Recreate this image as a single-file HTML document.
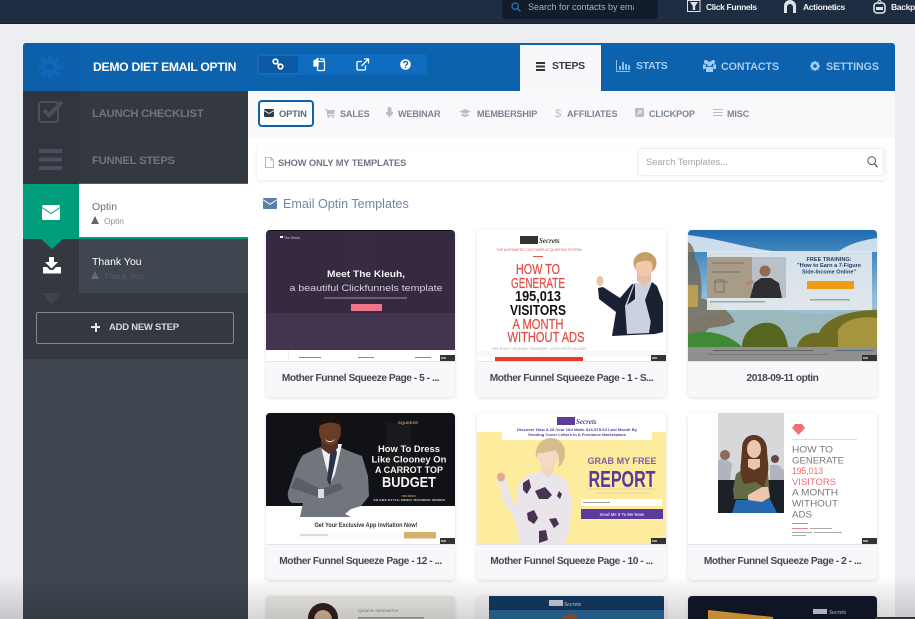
<!DOCTYPE html>
<html><head><meta charset="utf-8">
<style>
*{box-sizing:border-box}
html,body{margin:0;padding:0;width:915px;height:619px;overflow:hidden;background:#eceef2}
body{font-family:"Liberation Sans",sans-serif}
#w{position:absolute;left:0;top:0;width:915px;height:619px;overflow:hidden;filter:blur(.3px)}
.a{position:absolute}
.t{position:absolute;white-space:nowrap;line-height:14px;height:14px}
.b{font-weight:700}
svg{position:absolute;overflow:visible}
.card{position:absolute;width:189px;height:167px;background:#f8f8fa;border-radius:4px;box-shadow:0 1px 4px rgba(0,0,0,.13);overflow:hidden}
.card svg.th{left:0;top:0;width:189px;height:131px;overflow:hidden;filter:blur(.35px)}
.card .l{position:absolute;left:0;right:0;top:131px;height:36px;line-height:33px;text-align:center;font-weight:700;font-size:10.2px;letter-spacing:-.46px;color:#45484f;border-top:1px solid #e6e6ea}
.n{color:#7c8492;font-weight:700;font-size:9.1px}
.h{color:#a4cdf1;font-weight:700;font-size:10.4px}
</style></head><body><div id="w">

<!-- top bar -->
<div class="a" style="left:0;top:0;width:915px;height:24px;background:#1e2d41;border-bottom:1px solid #16212f"></div>
<div class="a" style="left:502px;top:0;width:156px;height:19px;background:#121c2a;border-radius:0 0 3px 3px"></div>
<svg style="left:511px;top:2px" width="10" height="10" viewBox="0 0 10 10"><circle cx="4.2" cy="4.2" r="3.2" fill="none" stroke="#2b78c2" stroke-width="1.3"/><path d="M6.6 6.6L9.4 9.4" stroke="#2b78c2" stroke-width="1.4"/></svg>
<div class="t" style="left:528px;top:0;width:106px;overflow:hidden;font-size:9px;color:#a9b0ba">Search for contacts by email</div>
<svg style="left:687px;top:0" width="14" height="12" viewBox="0 0 14 12"><rect x=".5" y=".5" width="12.5" height="11" fill="#1e2d41" stroke="#dfe3e8"/><path d="M3 2h8L8.2 6v4H5.8V6z" fill="#dfe3e8"/></svg>
<div class="t b" style="left:706px;top:0;font-size:8.6px;letter-spacing:-.4px;color:#eef0f3">Click Funnels</div>
<svg style="left:783px;top:0" width="14" height="13" viewBox="0 0 14 13"><path d="M1 13V6a6 6 0 0 1 12 0v7h-3V7a3 3 0 0 0-6 0v6z" fill="#dfe3e8"/></svg>
<div class="t b" style="left:803px;top:0;font-size:8.6px;letter-spacing:-.4px;color:#eef0f3">Actionetics</div>
<svg style="left:873px;top:0" width="13" height="13" viewBox="0 0 13 13"><rect x="1" y="3" width="11" height="10" rx="3" fill="none" stroke="#dfe3e8" stroke-width="1.6"/><rect x="3" y="7" width="7" height="3" fill="#dfe3e8"/><circle cx="6.5" cy="2" r="1.6" fill="none" stroke="#dfe3e8"/></svg>
<div class="t b" style="left:891px;top:0;font-size:8.6px;letter-spacing:-.4px;color:#eef0f3">Backpack</div>

<!-- panel header -->
<div class="a" style="left:23px;top:43px;width:872px;height:48px;background:#0d62ad;border-radius:3px 3px 0 0"></div>
<div class="a" style="left:23px;top:43px;width:56px;height:48px;background:#0c5fa9;border-radius:3px 0 0 0"></div>
<svg style="left:38px;top:55px" width="24" height="24" viewBox="0 0 24 24"><circle cx="12" cy="12" r="5.8" fill="none" stroke="#0e68b8" stroke-width="5"/><path d="M12 0v24M0 12h24M3.5 3.5l17 17M20.500 3.500l-17 17" stroke="#0e68b8" stroke-width="4" stroke-dasharray="4 16"/></svg>
<div class="t b" style="left:93px;top:60px;font-size:12.2px;color:#fff;letter-spacing:-.3px">DEMO DIET EMAIL OPTIN</div>
<div class="a" style="left:257px;top:54px;width:170px;height:21px;background:#0f6cbf;border-radius:3px"></div>
<div class="a" style="left:259px;top:56px;width:39px;height:17px;background:#0c5aa3;border-radius:2px"></div>
<svg style="left:272px;top:58px" width="12" height="13" viewBox="0 0 12 13" fill="none" stroke="#fff" stroke-width="1.7"><circle cx="3.500" cy="3.500" r="2.300"/><circle cx="8.500" cy="8.500" r="2.300"/><path d="M4.500 4.500l3 3"/></svg>
<svg style="left:313px;top:58px" width="13" height="13" viewBox="0 0 13 13" fill="none" stroke="#fff" stroke-width="1.200"><path d="M1 3l4-2.500V8H1z" fill="#fff"/><rect x="4.500" y="3.500" width="7" height="9" rx="1"/><path d="M7 1l4 0v2"/></svg>
<svg style="left:356px;top:58px" width="13" height="13" viewBox="0 0 13 13" fill="none" stroke="#fff" stroke-width="1.300"><path d="M9.500 7.500V11a1 1 0 0 1-1 1H2a1 1 0 0 1-1-1V4.500a1 1 0 0 1 1-1h4"/><path d="M5.500 8L12 1.500M8 1h4.500v4.500"/></svg>
<svg style="left:400px;top:59px" width="11" height="11" viewBox="0 0 11 11"><circle cx="5.500" cy="5.500" r="5.300" fill="#fff"/><path d="M3.700 4.200a1.900 1.700 0 1 1 2.800 1.500c-.7.400-1 .7-1 1.300" fill="none" stroke="#0d62ad" stroke-width="1.300"/><rect x="4.800" y="7.700" width="1.400" height="1.400" fill="#0d62ad"/></svg>

<div class="a" style="left:520px;top:45px;width:81px;height:46px;background:#f8f8fa"></div>
<div class="a" style="left:536px;top:62px;width:9px;height:1.500px;background:#333;box-shadow:0 3.500px 0 #333,0 7px 0 #333"></div>
<div class="t b" style="left:552px;top:60px;font-size:10.4px;letter-spacing:-.25px;color:#333a44">STEPS</div>
<svg style="left:616px;top:60px" width="14" height="12" viewBox="0 0 14 12" fill="#8dbdea"><path d="M0 0h1v11h13v1H0z"/><rect x="3" y="6" width="2" height="4"/><rect x="6" y="2" width="2" height="8"/><rect x="9" y="4" width="2" height="6"/><rect x="12" y="5" width="2" height="5"/></svg>
<div class="t h" style="left:636px;top:60px;letter-spacing:-.2px">STATS</div>
<svg style="left:703px;top:60px" width="13" height="12" viewBox="0 0 13 12" fill="#a4cdf1"><circle cx="3" cy="2" r="2"/><circle cx="10" cy="2" r="2"/><circle cx="6.500" cy="4" r="2.500"/><path d="M0 4.500h3L2.500 9H0zM10 4.500h3V9h-2.500zM3 7h7v5H3z"/></svg>
<div class="t h" style="left:721px;top:60px;font-size:10.6px">CONTACTS</div>
<svg style="left:810px;top:61px" width="10" height="10" viewBox="0 0 10 10"><circle cx="5" cy="5" r="3" fill="none" stroke="#a4cdf1" stroke-width="2.400"/><path d="M5 0v10M0 5h10M1.500 1.500l7 7M8.500 1.500l-7 7" stroke="#a4cdf1" stroke-width="1.400" stroke-dasharray="1.800 6.500"/></svg>
<div class="t h" style="left:826px;top:60px;font-size:10.6px">SETTINGS</div>

<!-- sidebar -->
<div class="a" style="left:23px;top:91px;width:225px;height:528px;background:#3f4650"></div>
<div class="a" style="left:23px;top:91px;width:225px;height:93px;background:#343941;border-bottom:1px solid #555a62"></div>
<div class="a" style="left:23px;top:91px;width:56px;height:93px;background:#31363e"></div>
<svg style="left:38px;top:100px" width="26" height="24" viewBox="0 0 26 24"><rect x="1" y="2" width="19" height="20" rx="3" fill="none" stroke="#4b515c" stroke-width="2"/><path d="M6 10l5 5L24 2" fill="none" stroke="#4b515c" stroke-width="4"/></svg>
<div class="t b" style="left:92px;top:107px;font-size:11.3px;color:#6f747d;letter-spacing:-.25px">LAUNCH CHECKLIST</div>
<div class="a" style="left:39px;top:149px;width:23px;height:4px;background:#4b515c;box-shadow:0 8.500px 0 #4b515c,0 17px 0 #4b515c"></div>
<div class="t b" style="left:92px;top:154px;font-size:11.3px;color:#6f747d;letter-spacing:-.25px">FUNNEL STEPS</div>

<div class="a" style="left:23px;top:184px;width:225px;height:55px;background:#fff;border-bottom:2px solid #009d7c"></div>
<div class="a" style="left:23px;top:184px;width:56px;height:55px;background:#009d7c"></div>
<svg style="left:42px;top:205px" width="18" height="15" viewBox="0 0 18 15"><rect width="18" height="15" rx="1.500" fill="#fff"/><path d="M0 2.500l9 6 9-6" fill="none" stroke="#009d7c" stroke-width="1"/></svg>
<div class="t" style="left:92px;top:200px;font-size:10.500px;color:#6a6e74">Optin</div>
<svg style="left:91px;top:216px" width="8" height="8" viewBox="0 0 8 8"><path d="M4 0l4 8H0z" fill="#666"/></svg>
<div class="t" style="left:104px;top:214px;font-size:8.500px;color:#8e9298;letter-spacing:-.1px">Optin</div>

<div class="a" style="left:23px;top:239px;width:225px;height:54px;background:#40464f"></div>
<div class="a" style="left:23px;top:239px;width:56px;height:54px;background:#343941"></div>
<svg style="left:41px;top:239px" width="22" height="10" viewBox="0 0 22 10"><path d="M0 0h22L11 10z" fill="#009d7c"/></svg>
<svg style="left:43px;top:257px" width="18" height="17" viewBox="0 0 18 17"><path d="M6 0h5v5h4l-6.500 6.500L2 5h4z" fill="#fff"/><path d="M0 10h4l3 3h3l3-3h5v6.500H0z" fill="#fff"/></svg>
<div class="t" style="left:92px;top:255px;font-size:10.500px;color:#fff">Thank You</div>
<svg style="left:91px;top:271px" width="8" height="8" viewBox="0 0 8 8"><path d="M4 0l4 8H0z" fill="#656b75"/></svg>
<div class="t" style="left:104px;top:269px;font-size:8.500px;color:#585e68;letter-spacing:-.1px">Thank You</div>

<div class="a" style="left:23px;top:293px;width:225px;height:66px;background:#343941"></div>
<svg style="left:42px;top:293px" width="19" height="11" viewBox="0 0 19 11"><path d="M0 0h19L9.500 11z" fill="#3f4650"/></svg>
<div class="a" style="left:36px;top:312px;width:198px;height:32px;border:1px solid #83878e;border-radius:2px"></div>
<div class="a" style="left:91px;top:326px;width:9px;height:2px;background:#e8e8e8"></div>
<div class="a" style="left:94.500px;top:322.500px;width:2px;height:9px;background:#e8e8e8"></div>
<div class="t b" style="left:109px;top:321px;font-size:9.5px;color:#d6d8db;letter-spacing:-.25px">ADD NEW STEP</div>

<!-- main -->
<div class="a" style="left:248px;top:91px;width:647px;height:528px;background:#fff"></div>
<div class="a" style="left:248px;top:91px;width:647px;height:47px;background:#f9f9fb"></div>
<div class="a" style="left:258px;top:100px;width:56px;height:27px;border:2px solid #0d62ad;border-radius:4px;background:#fff"></div>
<svg style="left:264px;top:109px" width="10" height="8" viewBox="0 0 10 8"><rect width="10" height="8" rx="1" fill="#333a48"/><path d="M0 1.500l5 3 5-3" fill="none" stroke="#fff" stroke-width=".8"/></svg>
<div class="t n" style="left:279px;top:107px;color:#5f6879;font-size:9.4px;letter-spacing:-.2px">OPTIN</div>
<svg style="left:325px;top:109px" width="10" height="9" viewBox="0 0 10 9" fill="#b8bdc6"><path d="M0 0h2l.5 1H10L9 5H3l.3 1H9v1H2.500L1.300 1H0z"/><circle cx="3.500" cy="8" r="1"/><circle cx="8" cy="8" r="1"/></svg>
<div class="t n" style="left:340px;top:107px;letter-spacing:-.15px">SALES</div>
<svg style="left:386px;top:107px" width="7" height="11" viewBox="0 0 7 11" fill="#b8bdc6"><rect x="1.500" width="4" height="7" rx="2"/><path d="M0 5h7v1a3.500 3.500 0 0 1-3 3v2H3V9A3.500 3.500 0 0 1 0 6z"/></svg>
<div class="t n" style="left:398px;top:107px;letter-spacing:-.15px">WEBINAR</div>
<svg style="left:459px;top:109px" width="12" height="8" viewBox="0 0 12 8" fill="#b8bdc6"><path d="M0 2.500L6 0l6 2.500L6 5z"/><path d="M2.500 4.500L6 6l3.500-1.500V7L6 8 2.500 7z"/></svg>
<div class="t n" style="left:477px;top:107px;letter-spacing:-.15px">MEMBERSHIP</div>
<div class="t" style="left:555px;top:107px;font-size:11px;color:#b8bdc6">$</div>
<div class="t n" style="left:567px;top:107px;letter-spacing:-.15px">AFFILIATES</div>
<svg style="left:635px;top:108px" width="9" height="9" viewBox="0 0 9 9"><rect width="9" height="9" rx="1" fill="#b8bdc6"/><path d="M2 7l4-4M3.500 3H6v2.500" fill="none" stroke="#f9f9fb" stroke-width=".9"/></svg>
<div class="t n" style="left:649px;top:107px;letter-spacing:-.15px">CLICKPOP</div>
<div class="a" style="left:713px;top:109px;width:10px;height:1px;background:#b8bdc6;box-shadow:0 3px 0 #b8bdc6,0 6px 0 #b8bdc6"></div>
<div class="t n" style="left:727px;top:107px;letter-spacing:-.15px">MISC</div>

<!-- filter strip -->
<div class="a" style="left:257px;top:146px;width:628px;height:34px;background:#fff;box-shadow:0 1px 3px rgba(0,0,0,.1);border-radius:2px"></div>
<svg style="left:265px;top:157px" width="9" height="11" viewBox="0 0 9 11"><path d="M.5.500h5.500L8.500 3v7.500H.5z M6 .500V3h2.500" fill="#fff" stroke="#a5a9b0" stroke-width=".8"/></svg>
<div class="t b" style="left:278px;top:156px;font-size:9.300px;color:#6f7585;letter-spacing:-.12px">SHOW ONLY MY TEMPLATES</div>
<div class="a" style="left:639px;top:149px;width:244px;height:26px;background:#fff;border-radius:2px;box-shadow:0 0 3px rgba(0,0,0,.17)"></div>
<div class="t" style="left:646px;top:155px;font-size:9.300px;color:#a3a5a9">Search Templates...</div>
<svg style="left:867px;top:156px" width="11" height="12" viewBox="0 0 11 12" fill="none" stroke="#555"><circle cx="4.700" cy="4.700" r="3.900"/><path d="M7.500 7.800L10.500 11.300" stroke-width="1.300"/></svg>

<svg style="left:263px;top:198px" width="14" height="11" viewBox="0 0 14 11"><rect width="14" height="11" rx="1" fill="#5c7fa5"/><path d="M0 1.800l7 4.500 7-4.500" fill="none" stroke="#fff" stroke-width=".9"/></svg>
<div class="t" style="left:283px;top:197px;font-size:12.600px;color:#6f88a3">Email Optin Templates</div>

<!-- card 1 -->
<div class="card" style="left:266px;top:230px"><svg class="th" viewBox="0 0 189 131">
<rect width="189" height="131" fill="#fff"/><rect width="189" height="120" fill="#352a40"/><rect y="83" width="189" height="37" fill="#43354f"/><rect x="80" width="30" height="83" fill="#3e3149" opacity=".3"/><rect width="189" height="1" fill="#111"/>
<rect x="14" y="6" width="3" height="2" fill="#fff"/><text x="18" y="9" font-size="3.500" fill="#cfc9d4">The Kleuh</text>
<text x="100" y="47" text-anchor="middle" font-size="9.500" font-weight="700" fill="#f3f1f4" textLength="78" lengthAdjust="spacingAndGlyphs">Meet The Kleuh,</text>
<text x="100" y="61" text-anchor="middle" font-size="9.500" fill="#d5d0da" textLength="153" lengthAdjust="spacingAndGlyphs">a beautiful Clickfunnels template</text>
<rect x="58" y="67.500" width="83" height="1" fill="#9a93a3"/><rect x="85" y="74" width="31" height="7" fill="#ef7489"/>
<rect x="33" y="127" width="22" height="1" fill="#888"/><rect x="92" y="127" width="16" height="1" fill="#888"/><rect x="149" y="127" width="16" height="1" fill="#888"/><rect x="22" y="120" width="1" height="11" fill="#eee"/>
<rect x="174" y="125" width="15" height="6" fill="#333"/><rect x="175" y="127" width="5" height="2" fill="#999"/></svg>
<div class="l">Mother Funnel Squeeze Page - 5 - ...</div></div>

<!-- card 2 -->
<div class="card" style="left:477px;top:230px"><svg class="th" viewBox="0 0 189 131">
<rect width="189" height="131" fill="#fff"/>
<rect x="43" y="6" width="18" height="8" fill="#333"/><text x="62" y="13" font-size="7" font-style="italic" font-family="Liberation Serif" font-weight="700" fill="#333">Secrets</text>
<text x="62" y="21" text-anchor="middle" font-size="3.200" fill="#c9655e" textLength="85" lengthAdjust="spacingAndGlyphs">THE AUTOMATED CUSTOMER ACQUISITION SYSTEM</text>
<rect x="56" y="26" width="10" height="1" fill="#e0524a"/>
<g font-size="14.500" text-anchor="middle" stroke-width=".25">
<text x="61" y="44" fill="#e14d45" stroke="#e14d45" textLength="44" lengthAdjust="spacingAndGlyphs">HOW TO</text>
<text x="61" y="58" fill="#e14d45" stroke="#e14d45" textLength="54" lengthAdjust="spacingAndGlyphs">GENERATE</text>
<text x="61" y="71" fill="#111" font-weight="700" textLength="46" lengthAdjust="spacingAndGlyphs">195,013</text>
<text x="61" y="85" fill="#111" font-weight="700" textLength="56" lengthAdjust="spacingAndGlyphs">VISITORS</text>
<text x="61" y="99" fill="#e14d45" stroke="#e14d45" textLength="51" lengthAdjust="spacingAndGlyphs">A MONTH</text>
<text x="69" y="112" fill="#e14d45" stroke="#e14d45" textLength="77" lengthAdjust="spacingAndGlyphs">WITHOUT ADS</text></g>
<text x="62" y="120" text-anchor="middle" font-size="3.200" fill="#b8a5a5" textLength="95" lengthAdjust="spacingAndGlyphs">FREE BONUS: THE $1k/DAY FRAMEWORK - LIMITED SPOTS AVAILABLE</text>
<rect y="121" width="189" height="6" fill="#f2f2f2" opacity=".5"/><rect x="18" y="127" width="88" height="4" fill="#e5392f"/>
<ellipse cx="123" cy="51" rx="3.500" ry="5" fill="#edc3a8"/>
<path d="M121 58l5-1 17 11 12-14 25 2 6 16v30l-8 2-43 2 4-24-17-13z" fill="#1b2133"/>
<path d="M157 53l18-1 3 12-6 39-22 1-2-28z" fill="#ccd1e2"/>
<path d="M158 53l-8 22 8-6zM175 52l-7 18 8 30 8-2-4-42z" fill="#1b2133"/>
<ellipse cx="168" cy="33" rx="11.500" ry="11" fill="#c49f68"/>
<path d="M160 42h14v9l-7 5-7-5z" fill="#e8bfa4"/><ellipse cx="167" cy="37" rx="8.500" ry="9.500" fill="#f0c9ad"/><path d="M159 33c2-6 7-8 11-8 4 1 6 4 7 8-5-3-11-3-18 0z" fill="#c49f68"/>
<rect x="174" y="125" width="15" height="6" fill="#333"/><rect x="175" y="127" width="5" height="2" fill="#999"/></svg>
<div class="l">Mother Funnel Squeeze Page - 1 - S...</div></div>

<!-- card 3 -->
<div class="card" style="left:688px;top:230px"><svg class="th" viewBox="0 0 189 131"><defs><linearGradient id="s" x1="0" y1="0" x2="0" y2="1"><stop offset="0" stop-color="#1e6bb0"/><stop offset=".5" stop-color="#8fbcd8"/><stop offset="1" stop-color="#c4d0d0"/></linearGradient></defs>
<rect width="189" height="131" fill="url(#s)"/>
<path d="M0 5c40 5 70 17 100 17H0zM150 22c10-8 25-12 39-14v14z" fill="#e6eef4" opacity=".85"/>
<path d="M0 90l60-12 70 6 59-6v40H0z" fill="#9db8bd"/>
<path d="M0 12c4 2 7 8 7 16 5 8 8 26 6 40 12 4 28 10 34 24l-10 4-16 2-7 8H0z" fill="#6d6048" opacity=".72"/>
<path d="M0 55h10v22H0z" fill="#c9a84c" opacity=".8"/>
<path d="M0 104c15-4 38-3 54 13H0z" fill="#3f8a36"/>
<path d="M54 117c0-15 14-26 28-24 12 2 16 12 18 24z" fill="#56651f"/>
<path d="M109 117c3-12 14-15 22-14 6-15 30-23 58-23v37z" fill="#6f6c24"/><path d="M150 100c5-9 20-15 39-12v29h-39z" fill="#a5963e"/>
<rect x="19" y="21" width="165" height="59" fill="#e5eaed" opacity=".9"/>
<rect x="19" y="27" width="45" height="41" fill="#a89b88"/><rect x="64" y="27" width="34" height="41" fill="#b8c0c8"/>
<path d="M24 33h32M24 42h28M26 52h14" stroke="#7b7064" stroke-width="1" fill="none"/><rect x="27" y="50" width="9" height="12" fill="none" stroke="#7b7064"/>
<circle cx="77" cy="41" r="5.500" fill="#8f6a52"/><path d="M62 68l4-15 7-5 10 0 8 5 3 15z" fill="#2f2f33"/><path d="M57 53l8-3 1 3-7 3z" fill="#b58a72"/>
<text x="141" y="31" text-anchor="middle" font-size="5.400" font-weight="700" fill="#263e66" textLength="45" lengthAdjust="spacingAndGlyphs">FREE TRAINING:</text>
<text x="141" y="37" text-anchor="middle" font-size="5.200" font-weight="700" fill="#263e66" textLength="64" lengthAdjust="spacingAndGlyphs">"How to Earn a 7-Figure</text>
<text x="141" y="43.500" text-anchor="middle" font-size="5.200" font-weight="700" fill="#263e66" textLength="54" lengthAdjust="spacingAndGlyphs">Side-Income Online"</text>
<rect x="119" y="51" width="47" height="8" fill="#f39a13"/><rect x="122" y="69" width="40" height="1.500" fill="#777" opacity=".6"/><rect x="22" y="71" width="55" height="1.500" fill="#777" opacity=".6"/>
<rect y="117" width="189" height="14" fill="#8e8f8e"/><rect x="25" y="120" width="100" height="1" fill="#666"/><rect x="20" y="124" width="120" height="1" fill="#777"/><rect x="147" y="120" width="38" height="1" fill="#567"/>
<rect x="174" y="125" width="15" height="6" fill="#333"/><rect x="175" y="127" width="5" height="2" fill="#999"/></svg>
<div class="l">2018-09-11 optin</div></div>

<!-- card 4 -->
<div class="card" style="left:266px;top:413px"><svg class="th" viewBox="0 0 189 131">
<rect width="189" height="131" fill="#fff"/><rect width="189" height="93" fill="#101218"/><rect x="120" y="10" width="25" height="60" fill="#1a1a1d"/>
<path d="M34 104l3-14-10 0c-4 0-7-8-4-14 4-12 8-26 14-34l15-7 14-5 14 7 16 6 6 20 1 20-8 10-10 3-6 5 6 3z" fill="#70767c"/>
<path d="M55 34l13-3 8 0-7 30-4 8-5-15z" fill="#f0f0f0"/><path d="M65 36l5 0 1 4-7 33-3-6 3-25z" fill="#283249"/>
<path d="M55 22h17v13l-9 6-8-6z" fill="#54301f"/><ellipse cx="64" cy="18" rx="11" ry="14" fill="#6a3d27"/><path d="M52 14c1-9 8-12 12-12s11 2 12 11c-6-4-16-5-24 1z" fill="#1c120d"/><path d="M59 26c3 3 7 3 10 0-2 4-8 4-10 0z" fill="#fff"/>
<path d="M30 64l25 12 19-6 3 6-22 9-30-10z" fill="#5a5f65"/><rect x="52" y="76" width="6" height="9" fill="#ddd"/>
<g text-anchor="middle" fill="#f4f4f4" font-weight="700">
<text x="143" y="39" font-size="9.500" textLength="62" lengthAdjust="spacingAndGlyphs">How To Dress</text>
<text x="143" y="49.500" font-size="9.500" textLength="75" lengthAdjust="spacingAndGlyphs">Like Clooney On</text>
<text x="143" y="60" font-size="9.500" textLength="68" lengthAdjust="spacingAndGlyphs">A CARROT TOP</text>
<text x="143" y="74" font-size="15" textLength="54" lengthAdjust="spacingAndGlyphs">BUDGET</text>
<text x="143" y="84" font-size="3" fill="#b99b5f" textLength="15" lengthAdjust="spacingAndGlyphs">FREE BONUS:</text>
<text x="143" y="88" font-size="3" fill="#ccc" textLength="72" lengthAdjust="spacingAndGlyphs">AN EBS STYLE VIDEO TRAINING SERIES</text>
<text x="142" y="11" font-size="4" fill="#b99b5f" textLength="20" lengthAdjust="spacingAndGlyphs">SQUEEZE</text></g>
<text x="100" y="114" text-anchor="middle" font-size="6.200" font-weight="700" fill="#333" textLength="103" lengthAdjust="spacingAndGlyphs">Get Your Exclusive App Invitation Now!</text>
<rect x="32" y="119" width="106" height="6" fill="#fbfbfb"/><rect x="34" y="121.500" width="28" height="1" fill="#bbb"/><rect x="138" y="119" width="32" height="6.500" fill="#d5b06c"/>
<rect x="174" y="125" width="15" height="6" fill="#333"/><rect x="175" y="127" width="5" height="2" fill="#999"/></svg>
<div class="l">Mother Funnel Squeeze Page - 12 - ...</div></div>

<!-- card 5 -->
<div class="card" style="left:477px;top:413px"><svg class="th" viewBox="0 0 189 131">
<rect width="189" height="131" fill="#fdeb9e"/><rect width="189" height="19" fill="#fff"/><rect x="25" width="150" height="27" fill="#fff"/>
<rect x="80" y="4" width="18" height="8" fill="#5b3d96"/><text x="99" y="11" font-size="7" font-style="italic" font-family="Liberation Serif" font-weight="700" fill="#5b3d96">Secrets</text>
<text x="100" y="18" text-anchor="middle" font-size="3.800" font-weight="700" fill="#5b3d96" textLength="120" lengthAdjust="spacingAndGlyphs">Discover How A 26-Year Old Made $16,975.63 Last Month By</text>
<text x="100" y="23" text-anchor="middle" font-size="3.800" font-weight="700" fill="#5b3d96" textLength="98" lengthAdjust="spacingAndGlyphs">Sending Cover Letters In A Freelance Marketplace</text>
<path d="M43 131l-5-24-5-9c-6-5-9-15-8-22l-6-8 3-4 7 3 3 10c3 9 4 13 7 18l2-22 8-11 14-3 12 0 14 7 6 24-3 27-5 14z" fill="#e9e5ea"/>
<path d="M46 70l6-4 2 8-4 7-4-4zM58 78l10-4 7 8-4 4-9 0zM50 100l7-3 4 8-4 6-6-4zM72 106l7-1 3 6-5 4zM62 118l7-1 2 10-9 3zM82 78l3 3-2 5-3-3z" fill="#4a3350"/>
<path d="M64 46h13v13l-6 5-7-5z" fill="#f4d6bf"/><ellipse cx="71" cy="43" rx="10" ry="12" fill="#f5d9c4"/><path d="M59 46c-2-14 7-21 15-21s14 6 14 15c0 6-3 13-7 14 2-6 1-13-3-17-6 2-13 3-17 3z" fill="#d7bd8c"/>
<ellipse cx="24" cy="64" rx="4" ry="4.500" fill="#e2a999"/>
<text x="145" y="51" text-anchor="middle" font-size="9.500" font-weight="700" fill="#7d5ea3" textLength="69" lengthAdjust="spacingAndGlyphs">GRAB MY FREE</text>
<text x="145" y="74" text-anchor="middle" font-size="23" font-weight="700" fill="#5a3a98" textLength="67" lengthAdjust="spacingAndGlyphs">REPORT</text>
<rect x="112" y="75.500" width="66" height="1" fill="#e2d696"/><rect x="118" y="79.500" width="56" height="1" fill="#e2d696"/>
<rect x="104" y="86" width="81" height="7" fill="#fff"/><rect x="106" y="89" width="27" height="1" fill="#999"/>
<rect x="104" y="96" width="82" height="10" fill="#5b3a9e"/><text x="145" y="103" text-anchor="middle" font-size="4.500" font-weight="700" fill="#dcd5ec" textLength="45" lengthAdjust="spacingAndGlyphs">Send Me It To Me Now!</text>
<rect x="174" y="125" width="15" height="6" fill="#333"/><rect x="175" y="127" width="5" height="2" fill="#999"/></svg>
<div class="l">Mother Funnel Squeeze Page - 10 - ...</div></div>

<!-- card 6 -->
<div class="card" style="left:688px;top:413px"><svg class="th" viewBox="0 0 189 131">
<rect width="189" height="131" fill="#fff"/><rect x="30" width="66" height="100" fill="#d6d8d9"/><rect x="30" y="67" width="66" height="33" fill="#1c2027"/>
<path d="M30 47l7-2 7 6-2 16H30zM82 52h8l6 5v10H82z" fill="#aeb4c0"/><circle cx="37" cy="42" r="5" fill="#8d6b5c"/><circle cx="87" cy="46" r="4" fill="#5d4a43"/>
<path d="M45 76l3-15 10-7h13l9 6 2 26H46z" fill="#656b43"/><path d="M48 87l34-1 7 14H44z" fill="#2468b0"/>
<path d="M54 36c0-9 5-14 12-14s13 6 13 15c0 9 3 17 0 26l-3 12-8-6-12 2c-4-9-4-15-3-22z" fill="#5d3722"/>
<ellipse cx="66" cy="36" rx="7" ry="9" fill="#edc7ad"/><path d="M60 46h12v8l-6 3-6-3z" fill="#edc7ad"/><path d="M60 82l14-8 6 0 2 10-8 5-14-2z" fill="#edc7ad"/>
<path d="M104 15l3-4h7l3 4-6.500 7z" fill="#f36f73"/><rect x="104" y="26" width="65" height="1" fill="#fbcfd0"/>
<g font-size="8.800" fill="#797979" font-family="Liberation Sans">
<text x="104" y="39.500" textLength="41" lengthAdjust="spacingAndGlyphs">HOW TO</text>
<text x="104" y="50.500" textLength="52" lengthAdjust="spacingAndGlyphs">GENERATE</text>
<text x="104" y="61" fill="#f46a6e" textLength="31" lengthAdjust="spacingAndGlyphs">195,013</text>
<text x="104" y="72" fill="#f46a6e" textLength="44" lengthAdjust="spacingAndGlyphs">VISITORS</text>
<text x="104" y="82.500" textLength="46" lengthAdjust="spacingAndGlyphs">A MONTH</text>
<text x="104" y="93.500" textLength="46" lengthAdjust="spacingAndGlyphs">WITHOUT</text>
<text x="104" y="104.500" textLength="20" lengthAdjust="spacingAndGlyphs">ADS</text></g>
<rect x="104" y="110" width="16" height="1" fill="#f47a7d"/>
<rect x="104" y="115" width="16" height="1" fill="#e98a8c"/><rect x="122" y="115" width="22" height="1" fill="#aaa"/><rect x="104" y="119" width="20" height="1" fill="#aaa"/><rect x="126" y="119" width="28" height="1" fill="#aaa"/><rect x="104" y="122" width="14" height="1" fill="#aaa"/>
<rect x="174" y="125" width="15" height="6" fill="#333"/><rect x="175" y="127" width="5" height="2" fill="#999"/></svg>
<div class="l">Mother Funnel Squeeze Page - 2 - ...</div></div>

<!-- card 7 -->
<div class="card" style="left:266px;top:596px"><svg class="th" viewBox="0 0 189 131">
<rect width="189" height="131" fill="#ecebe8"/><ellipse cx="57" cy="22" rx="15" ry="15" fill="#33201c"/><ellipse cx="57" cy="24" rx="9" ry="10" fill="#dcb49a"/>
<text x="92" y="16" font-size="4" fill="#777" textLength="40" lengthAdjust="spacingAndGlyphs">QUICK GROWTH</text><rect x="92" y="21" width="66" height="1.500" fill="#999"/></svg></div>
<!-- card 8 -->
<div class="card" style="left:477px;top:596px"><svg class="th" viewBox="0 0 189 131">
<rect width="189" height="131" fill="#f5f5f5"/><rect x="12" width="175" height="131" fill="#2a6a9c"/><rect x="12" width="175" height="14" fill="#153a63"/>
<rect x="72" y="4" width="14" height="6" fill="#ccd"/><text x="87" y="10" font-size="6" font-style="italic" font-family="Liberation Serif" fill="#dde">Secrets</text>
<ellipse cx="93" cy="28" rx="9" ry="10" fill="#a4522d"/></svg></div>
<!-- card 9 -->
<div class="card" style="left:688px;top:596px"><svg class="th" viewBox="0 0 189 131">
<rect width="189" height="131" fill="#12182b"/><path d="M20 14l65 7v30H20z" fill="#e6a63a"/>
<rect x="125" y="13" width="14" height="5" fill="#ccd"/><text x="141" y="18" font-size="6" font-style="italic" font-family="Liberation Serif" fill="#dde">Secrets</text></svg></div>

<!-- bottom video fade -->
<div class="a" style="left:0;top:575px;width:915px;height:44px;background:linear-gradient(to bottom,rgba(0,0,0,0),rgba(0,0,0,.16))"></div>
<div class="a" style="left:875px;top:617px;width:40px;height:2px;background:#333"></div>
</div></body></html>
